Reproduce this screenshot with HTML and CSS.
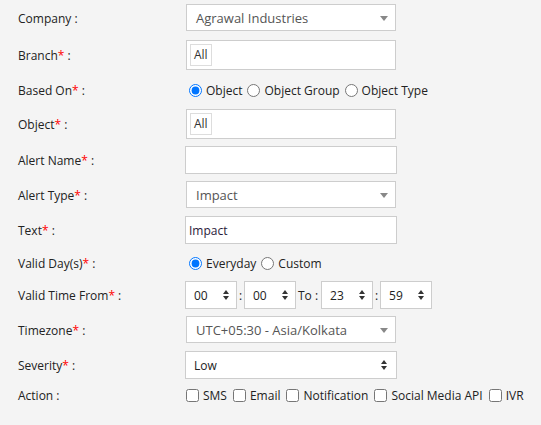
FILE: index.html
```html
<!DOCTYPE html>
<html>
<head>
<meta charset="utf-8">
<link rel="stylesheet" href="styles.css">
</head>
<body>
<form class="form">
  <div class="row h27">
    <label class="lbl">Company :</label>
    <div class="sel"><span class="sel-text">Agrawal Industries</span><span class="caret"></span></div>
  </div>
  <div class="row h30 mt9">
    <label class="lbl">Branch<span class="req">*</span> :</label>
    <div class="tagbox"><span class="tag">All</span></div>
  </div>
  <div class="row h28 mt6">
    <label class="lbl">Based On<span class="req">*</span> :</label>
    <div class="opts">
      <label class="opt"><input type="radio" name="based" checked> Object</label>
      <label class="opt"><input type="radio" name="based"> Object Group</label>
      <label class="opt"><input type="radio" name="based"> Object Type</label>
    </div>
  </div>
  <div class="row h30 mt5">
    <label class="lbl">Object<span class="req">*</span> :</label>
    <div class="tagbox"><span class="tag">All</span></div>
  </div>
  <div class="row h28 mt7">
    <label class="lbl">Alert Name<span class="req">*</span> :</label>
    <div class="inp"></div>
  </div>
  <div class="row h27 mt7">
    <label class="lbl">Alert Type<span class="req">*</span> :</label>
    <div class="sel"><span class="sel-text">Impact</span><span class="caret"></span></div>
  </div>
  <div class="row h28 mt8">
    <label class="lbl">Text<span class="req">*</span> :</label>
    <div class="inp"><span class="inp-text">Impact</span></div>
  </div>
  <div class="row h28 mt5">
    <label class="lbl">Valid Day(s)<span class="req">*</span> :</label>
    <div class="opts">
      <label class="opt"><input type="radio" name="day" checked> Everyday</label>
      <label class="opt"><input type="radio" name="day"> Custom</label>
    </div>
  </div>
  <div class="row h28 mt4">
    <label class="lbl">Valid Time From<span class="req">*</span> :</label>
    <div class="times">
      <div class="spin"><span>00</span><span class="ud"></span></div>
      <span class="sep">:</span>
      <div class="spin"><span>00</span><span class="ud"></span></div>
      <span class="to">To :</span>
      <div class="spin"><span>23</span><span class="ud"></span></div>
      <span class="sep">:</span>
      <div class="spin"><span>59</span><span class="ud"></span></div>
    </div>
  </div>
  <div class="row h27 mt7">
    <label class="lbl">Timezone<span class="req">*</span> :</label>
    <div class="sel"><span class="sel-text">UTC+05:30 - Asia/Kolkata</span><span class="caret"></span></div>
  </div>
  <div class="row h28 mt8">
    <label class="lbl">Severity<span class="req">*</span> :</label>
    <div class="inp nsel"><span class="nsel-text">Low</span><span class="ud"></span></div>
  </div>
  <div class="row h28 mt2">
    <label class="lbl">Action :</label>
    <div class="opts checks">
      <label class="chk"><input type="checkbox"> SMS</label>
      <label class="chk"><input type="checkbox"> Email</label>
      <label class="chk"><input type="checkbox"> Notification</label>
      <label class="chk"><input type="checkbox"> Social Media API</label>
      <label class="chk"><input type="checkbox"> IVR</label>
    </div>
  </div>
</form>
</body>
</html>
```
FILE: styles.css
```css
html, body {
  margin: 0;
  padding: 0;
  background: #f4f4f4;
}
body {
  font-family: "Open Sans", "Liberation Sans", sans-serif;
  font-size: 12px;
  color: #222;
  width: 541px;
  height: 425px;
  overflow: hidden;
}
.form {
  padding: 4px 0 0 18px;
  display: flex;
  flex-direction: column;
}
.row {
  display: flex;
  align-items: center;
}
.h27 { height: 27px; }
.h28 { height: 28px; }
.h30 { height: 30px; }
.mt2 { margin-top: 2px; }
.mt4 { margin-top: 4px; }
.mt5 { margin-top: 5px; }
.mt6 { margin-top: 6px; }
.mt7 { margin-top: 7px; }
.mt8 { margin-top: 8px; }
.mt9 { margin-top: 9px; }
.lbl {
  width: 167px;
  flex: none;
  color: #222;
  margin-top: 1px;
}
.req { color: #f00; }

.sel {
  margin-left: 1px;
  width: 210px;
  height: 100%;
  box-sizing: border-box;
  border: 1px solid #cdcdcd;
  background: #fff;
  display: flex;
  align-items: center;
  padding-left: 9px;
  padding-top: 1px;
  position: relative;
}
.sel-text {
  font-size: 13px;
  color: #555;
}
.caret {
  position: absolute;
  right: 7px;
  top: 50%;
  margin-top: -2px;
  width: 0;
  height: 0;
  border-left: 4px solid transparent;
  border-right: 4px solid transparent;
  border-top: 5px solid #888;
}
.tagbox {
  margin-left: 1px;
  width: 210px;
  height: 100%;
  box-sizing: border-box;
  border: 1px solid #cdcdcd;
  background: #fff;
  display: flex;
  align-items: center;
  padding-left: 3px;
}
.tag {
  height: 22px;
  box-sizing: border-box;
  border: 1px solid #ddd;
  padding: 0 3px;
  line-height: 20px;
  color: #333;
}
.inp {
  width: 212px;
  height: 100%;
  box-sizing: border-box;
  border: 1px solid #cdcdcd;
  background: #fff;
  display: flex;
  align-items: center;
  padding-left: 3px;
}
.inp-text { color: #2a1a3a; }
.nsel {
  padding-left: 8px;
  position: relative;
}
.nsel-text { color: #222; }
.ud {
  position: absolute;
  right: 8px;
  top: 50%;
  width: 7px;
  height: 10px;
  margin-top: -5px;
}
.ud::before, .ud::after {
  content: "";
  position: absolute;
  left: 0;
  width: 0;
  height: 0;
  border-left: 3.5px solid transparent;
  border-right: 3.5px solid transparent;
}
.ud::before { top: 0; border-bottom: 4px solid #333; }
.ud::after { bottom: 0; border-top: 4px solid #333; }

.opts {
  display: flex;
  align-items: center;
  padding-left: 4px;
}
.opt {
  display: flex;
  align-items: center;
  margin-right: 5px;
}
.opt input {
  width: 13px;
  height: 13px;
  margin: 0 4px 0 0;
}
.checks { padding-left: 1px; }
.chk {
  display: flex;
  align-items: center;
  margin-right: 6px;
}
.chk input {
  width: 13px;
  height: 13px;
  margin: 0 4px 0 0;
}

.times {
  display: flex;
  align-items: center;
  height: 100%;
}
.spin {
  width: 52px;
  height: 100%;
  box-sizing: border-box;
  border: 1px solid #cdcdcd;
  background: #fff;
  position: relative;
  display: flex;
  align-items: center;
  padding-left: 8px;
  color: #222;
}
.spin .ud { right: 6px; }
.sep {
  width: 7px;
  text-align: center;
  color: #222;
}
.to {
  margin: 0 3px 0 2px;
  color: #222;
}
```
